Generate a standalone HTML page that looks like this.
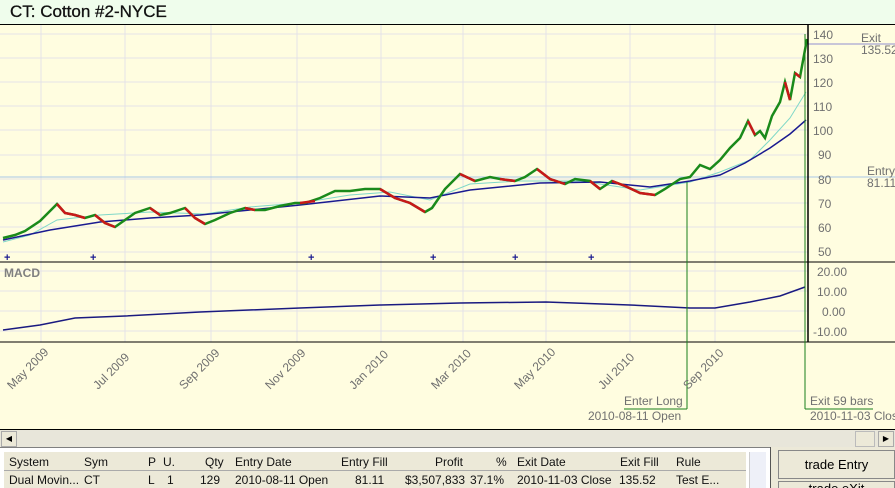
<!DOCTYPE html>
<html style="width:895px;height:488px;overflow:hidden"><head><meta charset="utf-8"><style>
body{margin:0;width:895px;height:488px;overflow:hidden;background:#fffde0;font-family:"Liberation Sans",sans-serif;position:relative}
.title{position:absolute;left:0;top:0;width:895px;height:24px;background:#effdec;border-bottom:1px solid #000}
.title span{position:absolute;left:10px;top:2px;font-size:17px;color:#111;-webkit-text-stroke:0.3px #111}
svg{position:absolute;left:0;top:0}
.sb{position:absolute;left:0;top:429px;width:895px;height:17px;background:#e8e6da;border-top:1px solid #000}
.tbl{position:absolute;left:0;top:447px;width:770px;height:41px;background:#fff;border-top:1px solid #808080}
.cell{position:absolute;font-size:12px;color:#111;white-space:nowrap}
.btn{position:absolute;left:778px;width:115px;height:27px;background:#ece9d8;border:1px solid #888;font-size:13px;text-align:center;line-height:27px;overflow:hidden}
</style></head><body>
<div class="title"><span>CT: Cotton #2-NYCE</span></div>
<svg width="895" height="430" viewBox="0 0 895 430">
<g stroke="#e4e2e8" stroke-width="1">
<line x1="0" y1="34" x2="808" y2="34"/><line x1="0" y1="58" x2="808" y2="58"/><line x1="0" y1="82" x2="808" y2="82"/><line x1="0" y1="106" x2="808" y2="106"/><line x1="0" y1="130" x2="808" y2="130"/><line x1="0" y1="155" x2="808" y2="155"/><line x1="0" y1="179" x2="808" y2="179"/><line x1="0" y1="203" x2="808" y2="203"/><line x1="0" y1="227" x2="808" y2="227"/><line x1="0" y1="252" x2="808" y2="252"/>
<line x1="0" y1="271" x2="808" y2="271"/><line x1="0" y1="291" x2="808" y2="291"/><line x1="0" y1="311" x2="808" y2="311"/><line x1="0" y1="331" x2="808" y2="331"/>
<line x1="41" y1="25" x2="41" y2="342"/><line x1="125" y1="25" x2="125" y2="342"/><line x1="211" y1="25" x2="211" y2="342"/><line x1="297" y1="25" x2="297" y2="342"/><line x1="381" y1="25" x2="381" y2="342"/><line x1="463" y1="25" x2="463" y2="342"/><line x1="546" y1="25" x2="546" y2="342"/><line x1="630" y1="25" x2="630" y2="342"/><line x1="715" y1="25" x2="715" y2="342"/>
</g>
<line x1="0" y1="177" x2="895" y2="177" stroke="#a8c8e8"/>
<line x1="808" y1="44" x2="895" y2="44" stroke="#9090d0"/>
<polyline fill="none" stroke="#7fd8c8" stroke-width="1" points="3,242 30,235 57,220 100,215 150,212 205,214 250,207 300,203 350,195 390,192 430,200 470,184 520,181 580,181 640,190 690,182 720,172 750,160 770,140 790,118 806,92"/>
<polyline fill="none" stroke="#1a1a90" stroke-width="1.5" points="3,240 50,230 100,222 150,218 200,215 300,205 380,196 430,198 470,190 540,183 600,182 650,187 690,181 720,175 745,163 770,148 790,134 806,120"/>
<polyline fill="none" stroke="#1a8a1a" stroke-width="2.5" points="3,238 15,235 25,231 40,221 50,211 57,204 65,213 75,215 85,218 95,215 105,223 115,227 125,220 135,213 150,208 160,215 170,213 185,208 195,218 205,224 215,220 230,213 245,208 255,210 265,210 280,206 295,203 305,203 320,198 335,191 350,191 365,189 380,189 395,198 410,203 425,212 432,208 445,189 460,174 475,181 490,177 500,179 515,181 525,177 537,169 550,179 565,184 575,179 590,181 600,189 612,181 625,186 640,193 655,195 665,189 680,179 690,177 700,165 710,169 720,160 730,148 740,138 748,121 755,135 760,131 765,138 772,116 780,102 785,82 790,100 795,73 800,77 807,39"/>
<g fill="none" stroke="#c81818" stroke-width="2.5">
<polyline points="57,204 65,213 75,215 85,218"/><polyline points="95,215 105,223 115,227"/><polyline points="150,208 160,215"/><polyline points="185,208 195,218 205,224"/><polyline points="245,208 255,210"/><polyline points="300,203 315,201"/><polyline points="380,189 395,198 410,203 425,212"/><polyline points="460,174 475,181"/><polyline points="500,179 515,181"/><polyline points="537,169 550,179 565,184"/><polyline points="590,181 600,189"/><polyline points="612,181 625,186 640,193 655,195"/><polyline points="748,121 755,135"/><polyline points="785,82 790,100"/><polyline points="795,73 800,77"/>
</g>
<g fill="#1a1a90" font-size="11" font-weight="bold"><text x="4" y="261">+</text><text x="90" y="261">+</text><text x="308" y="261">+</text><text x="430" y="261">+</text><text x="512" y="261">+</text><text x="588" y="261">+</text></g>
<polyline fill="none" stroke="#1a1a80" stroke-width="1.5" points="3,330 40,325 75,318 125,316 200,312 300,308 380,305 460,303 546,302 630,305 690,308 715,308 750,302 780,296 805,287"/>
<line x1="0" y1="262" x2="895" y2="262" stroke="#000"/>
<line x1="0" y1="342" x2="895" y2="342" stroke="#000"/>
<line x1="808" y1="25" x2="808" y2="342" stroke="#000" stroke-width="1.5"/>
<line x1="687" y1="182" x2="687" y2="409" stroke="#1a801a"/>
<line x1="624" y1="409" x2="687" y2="409" stroke="#1a801a"/>
<line x1="805" y1="34" x2="805" y2="409" stroke="#1a801a"/>
<line x1="805" y1="409" x2="873" y2="409" stroke="#1a801a"/>
<text x="4" y="277" font-size="12" font-weight="bold" fill="#808080">MACD</text>
<g fill="#707070" font-size="12">
<text x="813" y="39">140</text><text x="813" y="63">130</text><text x="813" y="87">120</text><text x="813" y="111">110</text><text x="813" y="135">100</text><text x="818" y="159">90</text><text x="818" y="184">80</text><text x="818" y="208">70</text><text x="818" y="232">60</text><text x="818" y="256">50</text>
<text x="861" y="42">Exit</text><text x="861" y="54">135.52</text><text x="867" y="175">Entry</text><text x="867" y="187">81.11</text>
<text x="817" y="276">20.00</text><text x="817" y="296">10.00</text><text x="822" y="316">0.00</text><text x="813" y="336">-10.00</text>
<text x="624" y="405">Enter Long</text><text x="588" y="420">2010-08-11 Open</text>
<text x="810" y="405">Exit 59 bars</text><text x="810" y="420">2010-11-03 Close</text>
<g font-size="12">
<text transform="translate(12,390) rotate(-45)">May 2009</text>
<text transform="translate(98,390) rotate(-45)">Jul 2009</text>
<text transform="translate(184,390) rotate(-45)">Sep 2009</text>
<text transform="translate(270,390) rotate(-45)">Nov 2009</text>
<text transform="translate(354,390) rotate(-45)">Jan 2010</text>
<text transform="translate(436,390) rotate(-45)">Mar 2010</text>
<text transform="translate(519,390) rotate(-45)">May 2010</text>
<text transform="translate(603,390) rotate(-45)">Jul 2010</text>
<text transform="translate(688,390) rotate(-45)">Sep 2010</text>
</g></g>
</svg>
<div class="sb"><div style="position:absolute;left:1px;top:1px;width:14px;height:14px;background:#ece9d8;border:1px solid #aaa;font-size:8px;line-height:14px;text-align:center">◀</div><div style="position:absolute;right:20px;top:1px;width:18px;height:14px;background:#ece9d8;border:1px solid #bbb"></div><div style="position:absolute;right:1px;top:1px;width:14px;height:14px;background:#ece9d8;border:1px solid #aaa;font-size:8px;line-height:14px;text-align:center">▶</div></div>
<div class="tbl">
<div style="position:absolute;left:4px;top:4px;width:742px;height:18px;background:#ece9d8;border-bottom:1px solid #aaa"></div>
<div style="position:absolute;left:4px;top:23px;width:742px;height:18px;background:#ece9d8"></div>
<div style="position:absolute;left:749px;top:4px;width:16px;height:37px;background:#eef0f8;border-left:1px solid #ccc"></div>
<div class="cell" style="left:9px;top:7px">System</div><div class="cell" style="left:84px;top:7px">Sym</div><div class="cell" style="left:148px;top:7px">P</div><div class="cell" style="left:163px;top:7px">U.</div><div class="cell" style="left:205px;top:7px">Qty</div><div class="cell" style="left:235px;top:7px">Entry Date</div><div class="cell" style="left:341px;top:7px">Entry Fill</div><div class="cell" style="left:435px;top:7px">Profit</div><div class="cell" style="left:496px;top:7px">%</div><div class="cell" style="left:517px;top:7px">Exit Date</div><div class="cell" style="left:620px;top:7px">Exit Fill</div><div class="cell" style="left:676px;top:7px">Rule</div>
<div class="cell" style="left:9px;top:25px">Dual Movin...</div><div class="cell" style="left:84px;top:25px">CT</div><div class="cell" style="left:148px;top:25px">L</div><div class="cell" style="left:167px;top:25px">1</div><div class="cell" style="left:200px;top:25px">129</div><div class="cell" style="left:235px;top:25px">2010-08-11 Open</div><div class="cell" style="left:355px;top:25px">81.11</div><div class="cell" style="left:405px;top:25px">$3,507,833</div><div class="cell" style="left:470px;top:25px">37.1%</div><div class="cell" style="left:517px;top:25px">2010-11-03 Close</div><div class="cell" style="left:619px;top:25px">135.52</div><div class="cell" style="left:676px;top:25px">Test E...</div>
</div>
<div style="position:absolute;left:770px;top:447px;width:125px;height:41px;background:#ece9d8;border-left:1px solid #555"></div>
<div class="btn" style="top:450px">trade Entry</div>
<div class="btn" style="top:481px;height:6px;line-height:14px;border-bottom:none">trade eXit</div>
</body></html>
